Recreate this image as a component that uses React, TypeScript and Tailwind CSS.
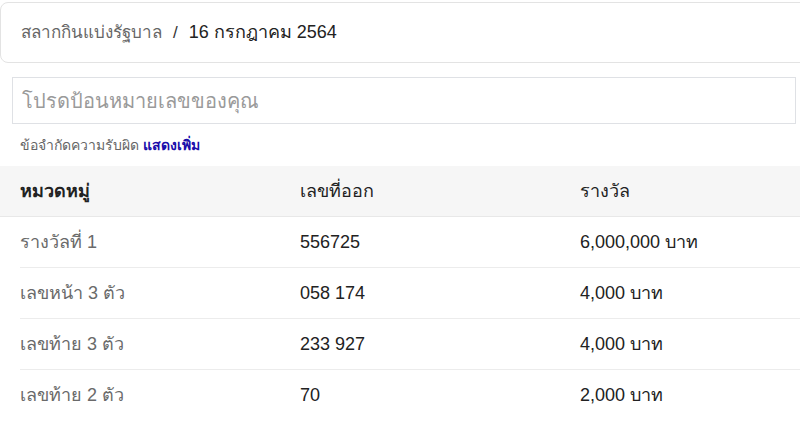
const rows = [
  { cat: "รางวัลที่ 1", num: "556725", prize: "6,000,000 บาท" },
  { cat: "เลขหน้า 3 ตัว", num: "058 174", prize: "4,000 บาท" },
  { cat: "เลขท้าย 3 ตัว", num: "233 927", prize: "4,000 บาท" },
  { cat: "เลขท้าย 2 ตัว", num: "70", prize: "2,000 บาท" },
];

export default function App() {
  return (
    <div className="w-[800px] h-[434px] overflow-hidden bg-white font-['Liberation_Sans',sans-serif]">
      <div className="pt-[2px]">
        <div className="w-[820px] h-[61px] border border-[#e3e3e3] rounded-lg flex items-center px-5 text-[17px]">
          <span className="text-[#666]">สลากกินแบ่งรัฐบาล</span>
          <span className="text-[#333] mx-[11px]">/</span>
          <span className="text-[#222] text-[18px]">16 กรกฎาคม 2564</span>
        </div>
      </div>

      <div className="pl-3 pr-1 mt-[14px]">
        <div className="h-[47px] border border-[#dfe1e5] flex items-center px-[9px]">
          <input
            className="w-full outline-none text-[20px] text-[#222] placeholder:text-[#9a9a9a]"
            placeholder="โปรดป้อนหมายเลขของคุณ"
          />
        </div>
      </div>

      <div className="px-5 h-[42px] pt-[1px] flex items-center text-[14px] text-[#666]">
        ข้อจำกัดความรับผิด
        <a className="ml-1 font-bold text-[#1a0dab]">แสดงเพิ่ม</a>
      </div>

      <div className="grid grid-cols-[280px_280px_1fr] h-[51px] items-center bg-[#f6f6f6] border-b border-[#e8e8e8] px-5 text-[18px] text-[#222]">
        <div className="font-bold">หมวดหมู่</div>
        <div>เลขที่ออก</div>
        <div>รางวัล</div>
      </div>

      <div className="pl-5">
        {rows.map((r, i) => (
          <div
            key={r.cat}
            className={`grid grid-cols-[280px_280px_1fr] h-[51px] items-center text-[18px] ${
              i < rows.length - 1 ? "border-b border-[#ececec]" : ""
            }`}
          >
            <div className="text-[#6a6a6a]">{r.cat}</div>
            <div className="text-[#222]">{r.num}</div>
            <div className="text-[#222]">{r.prize}</div>
          </div>
        ))}
      </div>
    </div>
  );
}
